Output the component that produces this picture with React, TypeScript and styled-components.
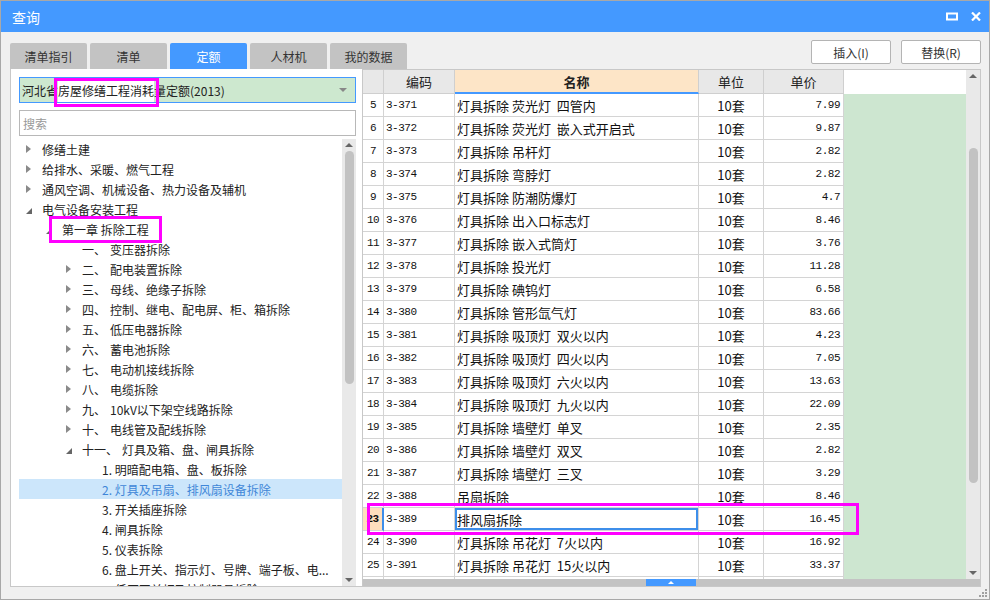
import React from 'react';
import styled, { createGlobalStyle } from 'styled-components';

// Global
const GlobalStyle = createGlobalStyle`
html, body {
  margin: 0;
  padding: 0;
  background: #f0f0f0;
}
body {
  font-family: "Noto Sans CJK SC", "Noto Sans", sans-serif;
  color: #222;
}
`

// Window frame
const Window = styled.div`
position: relative;
width: 990px;
height: 600px;
box-sizing: border-box;
border: 1px solid #a8a8a8;
background: #f0f0f0;
display: flex;
flex-direction: column;
overflow: hidden;
`

const TitleBar = styled.div`
height: 31px;
flex-shrink: 0;
background: #4499ff;
color: #fff;
font-size: 14px;
display: flex;
align-items: center;
justify-content: space-between;
padding: 0 8px 0 11px;
`

const TitleIcons = styled.div`
display: flex;
align-items: center;
gap: 13px;
`

// Toolbar with tabs and buttons
const Toolbar = styled.div`
height: 37px;
flex-shrink: 0;
display: flex;
justify-content: space-between;
padding: 0 8px 0 9px;
`

const Tabs = styled.div`
display: flex;
align-self: flex-end;
gap: 3px;
`

const Tab = styled.div<{ $active?: boolean }>`
width: 77px;
height: 26px;
border-radius: 2px 2px 0 0;
background: ${p => (p.$active ? '#4499ff' : '#c3c3c3')};
color: ${p => (p.$active ? '#fff' : '#333')};
font-size: 12px;
display: flex;
align-items: center;
justify-content: center;
`

const Buttons = styled.div`
display: flex;
gap: 10px;
margin-top: 8px;
`

const Button = styled.div`
width: 80px;
height: 24px;
box-sizing: border-box;
background: #fff;
border: 1px solid #b4b4b4;
border-radius: 2px;
font-size: 12px;
color: #333;
display: flex;
align-items: center;
justify-content: center;
`

// Body
const Body = styled.div`
height: 518px;
flex-shrink: 0;
display: flex;
padding-left: 9px;
`

const LeftPanel = styled.div`
width: 352px;
box-sizing: border-box;
background: #fff;
border-left: 1px solid #c8c8c8;
border-bottom: 1px solid #c8c8c8;
padding: 8px 6px 0 8px;
display: flex;
flex-direction: column;
`

const Dropdown = styled.div`
height: 26px;
box-sizing: border-box;
background: #cde8cf;
border: 1px solid #4499ff;
font-size: 12px;
padding: 0 8px 0 2px;
display: flex;
align-items: center;
`

const DropText = styled.span<{ $marked?: boolean }>`
align-self: stretch;
display: flex;
align-items: center;
white-space: nowrap;
background: ${p => (p.$marked ? '#fff' : 'transparent')};
`

const Caret = styled.span`
margin-left: auto;
width: 0;
height: 0;
border-left: 4px solid transparent;
border-right: 4px solid transparent;
border-top: 4px solid #888;
`

const SearchBox = styled.div`
margin-top: 7px;
height: 26px;
box-sizing: border-box;
border: 1px solid #b8b8b8;
font-size: 12px;
color: #999;
padding-left: 3px;
display: flex;
align-items: center;
`

const TreeWrap = styled.div`
margin-top: 3px;
flex: 1;
min-height: 0;
display: flex;
`

const TreeList = styled.div`
flex: 1;
overflow: hidden;
`

const TreeRow = styled.div<{ $level: number; $selected?: boolean }>`
height: 20px;
display: flex;
align-items: center;
padding-left: ${p => p.$level * 20}px;
font-size: 12px;
white-space: nowrap;
background: ${p => (p.$selected ? '#cce6fb' : 'transparent')};
color: ${p => (p.$selected ? '#3f86d8' : '#222')};
`

const ArrowBox = styled.span`
width: 23px;
flex-shrink: 0;
display: flex;
align-items: center;
padding-left: 7px;
box-sizing: border-box;
`

const Arrow = styled.span<{ $open?: boolean }>`
width: 0;
height: 0;
${p =>
  p.$open
    ? `border-left: 6px solid transparent; border-bottom: 6px solid #666; margin-top: 3px;`
    : `border-left: 5px solid #8a8a8a; border-top: 4px solid transparent; border-bottom: 4px solid transparent;`}
`

const TreeNum = styled.span`
margin-right: 4px;
`

// Scrollbars
const VScroll = styled.div<{ $width: number }>`
width: ${p => p.$width}px;
flex-shrink: 0;
background: #e9e9e9;
display: flex;
flex-direction: column;
align-items: center;
`

const ScrollArrow = styled.div<{ $dir: 'up' | 'down' }>`
width: 0;
height: 0;
border-left: 4px solid transparent;
border-right: 4px solid transparent;
${p =>
  p.$dir === 'up'
    ? 'border-bottom: 4px solid #666; margin-top: 4px;'
    : 'border-top: 4px solid #666; margin-bottom: 4px;'}
`

const ScrollThumb = styled.div<{ $top: number; $height: number }>`
width: 9px;
border-radius: 5px;
background: #c2c2c2;
margin-top: ${p => p.$top}px;
height: ${p => p.$height}px;
`

const Spacer = styled.div`
flex: 1;
`

// Table panel
const TablePanel = styled.div`
flex: 1;
margin-right: 8px;
box-sizing: border-box;
border: 1px solid #c8c8c8;
background: #fff;
display: flex;
flex-direction: column;
`

const TableMain = styled.div`
flex: 1;
min-height: 0;
display: flex;
`

const Grid = styled.div`
flex: 1;
overflow: hidden;
`

const GridRow = styled.div<{ $header?: boolean }>`
display: grid;
grid-template-columns: 21px 71px 244px 65px 80px 1fr;
height: ${p => (p.$header ? 24 : 23)}px;
`

const HeadCell = styled.div<{ $accent?: boolean; $blank?: boolean }>`
box-sizing: border-box;
background: ${p => (p.$blank ? '#fff' : p.$accent ? '#fde5c7' : '#e8e8e8')};
border-right: ${p => (p.$blank ? 'none' : '1px solid #cfcfcf')};
border-bottom: ${p => (p.$blank ? 'none' : p.$accent ? '2px solid #4499ff' : '1px solid #cfcfcf')};
font-size: 13px;
font-weight: ${p => (p.$accent ? 700 : 400)};
color: #222;
display: flex;
align-items: center;
justify-content: center;
`

const Cell = styled.div<{ $align?: 'left' | 'center' | 'right'; $focus?: boolean }>`
box-sizing: border-box;
border-right: 1px solid #d4d4d4;
border-bottom: 1px solid #d4d4d4;
font-size: 13px;
color: #111;
white-space: pre;
overflow: hidden;
display: flex;
align-items: center;
justify-content: ${p => (p.$align === 'center' ? 'center' : p.$align === 'right' ? 'flex-end' : 'flex-start')};
padding: ${p => (p.$align === 'right' ? '0 3px 0 0' : p.$align === 'center' ? '0' : '0 0 0 2px')};
box-shadow: ${p => (p.$focus ? 'inset 0 0 0 2px #3d8eea' : 'none')};
`

const RowNumCell = styled(Cell)<{ $current?: boolean }>`
justify-content: center;
padding: 0;
background: ${p => (p.$current ? '#ffdfbe' : '#fff')};
border-right: ${p => (p.$current ? '2px solid #3d8eea' : '1px solid #d4d4d4')};
font-weight: ${p => (p.$current ? 700 : 400)};
`

const FillerCell = styled.div`
background: #cde6d0;
`

const Mono = styled.span`
font-family: "Liberation Mono", "DejaVu Sans Mono", monospace;
font-size: 11px;
letter-spacing: -0.5px;
`

const HScroll = styled.div`
height: 7px;
flex-shrink: 0;
background: #c3c3c3;
display: flex;
`

const HThumb = styled.div`
margin-left: 283px;
width: 50px;
background: #4499ff;
display: flex;
align-items: center;
justify-content: center;
`

const TinyUp = styled.span`
width: 0;
height: 0;
border-left: 3px solid transparent;
border-right: 3px solid transparent;
border-bottom: 3px solid #fff;
`

const BottomStrip = styled.div`
flex: 1;
display: flex;
justify-content: flex-end;
align-items: flex-end;
padding: 0 2px 2px 0;
`

// Annotation marks laid over the screenshot
const Mark = styled.div<{ $x: number; $y: number; $w: number; $h: number }>`
position: absolute;
left: ${p => p.$x - 1}px;
top: ${p => p.$y - 1}px;
width: ${p => p.$w}px;
height: ${p => p.$h}px;
box-sizing: border-box;
border: 3px solid #f0f;
pointer-events: none;
`

type Node = { level: number; arrow?: 'open' | 'closed'; num?: string; label: string; selected?: boolean };

const tree: Node[] = [
  { level: 0, arrow: 'closed', label: '修缮土建' },
  { level: 0, arrow: 'closed', label: '给排水、采暖、燃气工程' },
  { level: 0, arrow: 'closed', label: '通风空调、机械设备、热力设备及辅机' },
  { level: 0, arrow: 'open', label: '电气设备安装工程' },
  { level: 1, arrow: 'open', label: '第一章 拆除工程' },
  { level: 2, num: '一、', label: '变压器拆除' },
  { level: 2, arrow: 'closed', num: '二、', label: '配电装置拆除' },
  { level: 2, arrow: 'closed', num: '三、', label: '母线、绝缘子拆除' },
  { level: 2, arrow: 'closed', num: '四、', label: '控制、继电、配电屏、柜、箱拆除' },
  { level: 2, arrow: 'closed', num: '五、', label: '低压电器拆除' },
  { level: 2, arrow: 'closed', num: '六、', label: '蓄电池拆除' },
  { level: 2, arrow: 'closed', num: '七、', label: '电动机接线拆除' },
  { level: 2, arrow: 'closed', num: '八、', label: '电缆拆除' },
  { level: 2, arrow: 'closed', num: '九、', label: '10kV以下架空线路拆除' },
  { level: 2, arrow: 'closed', num: '十、', label: '电线管及配线拆除' },
  { level: 2, arrow: 'open', num: '十一、', label: '灯具及箱、盘、闸具拆除' },
  { level: 3, label: '1. 明暗配电箱、盘、板拆除' },
  { level: 3, label: '2. 灯具及吊扇、排风扇设备拆除', selected: true },
  { level: 3, label: '3. 开关插座拆除' },
  { level: 3, label: '4. 闸具拆除' },
  { level: 3, label: '5. 仪表拆除' },
  { level: 3, label: '6. 盘上开关、指示灯、号牌、端子板、电...' },
  { level: 3, label: '7. 低压开关柜及控制器具拆除' },
];

const rows: [number, string, string, string][] = [
  [5, '3-371', '灯具拆除 荧光灯  四管内', '7.99'],
  [6, '3-372', '灯具拆除 荧光灯  嵌入式开启式', '9.87'],
  [7, '3-373', '灯具拆除 吊杆灯', '2.82'],
  [8, '3-374', '灯具拆除 弯脖灯', '2.82'],
  [9, '3-375', '灯具拆除 防潮防爆灯', '4.7'],
  [10, '3-376', '灯具拆除 出入口标志灯', '8.46'],
  [11, '3-377', '灯具拆除 嵌入式筒灯', '3.76'],
  [12, '3-378', '灯具拆除 投光灯', '11.28'],
  [13, '3-379', '灯具拆除 碘钨灯', '6.58'],
  [14, '3-380', '灯具拆除 管形氙气灯', '83.66'],
  [15, '3-381', '灯具拆除 吸顶灯  双火以内', '4.23'],
  [16, '3-382', '灯具拆除 吸顶灯  四火以内', '7.05'],
  [17, '3-383', '灯具拆除 吸顶灯  六火以内', '13.63'],
  [18, '3-384', '灯具拆除 吸顶灯  九火以内', '22.09'],
  [19, '3-385', '灯具拆除 墙壁灯  单叉', '2.35'],
  [20, '3-386', '灯具拆除 墙壁灯  双叉', '2.82'],
  [21, '3-387', '灯具拆除 墙壁灯  三叉', '3.29'],
  [22, '3-388', '吊扇拆除', '8.46'],
  [23, '3-389', '排风扇拆除', '16.45'],
  [24, '3-390', '灯具拆除 吊花灯  7火以内', '16.92'],
  [25, '3-391', '灯具拆除 吊花灯  15火以内', '33.37'],
];

function App(): JSX.Element {
  return (
    <>
      <GlobalStyle />
      <Window>
        <TitleBar>
          <span>查询</span>
          <TitleIcons>
            <svg width="12" height="9" viewBox="0 0 12 9">
              <rect x="1" y="1.5" width="10" height="6" fill="none" stroke="#fff" strokeWidth="2" />
            </svg>
            <svg width="10" height="9" viewBox="0 0 10 9">
              <path d="M1 0.5 L9 8.5 M9 0.5 L1 8.5" stroke="#fff" strokeWidth="2.2" />
            </svg>
          </TitleIcons>
        </TitleBar>

        <Toolbar>
          <Tabs>
            <Tab>清单指引</Tab>
            <Tab>清单</Tab>
            <Tab $active>定额</Tab>
            <Tab>人材机</Tab>
            <Tab>我的数据</Tab>
          </Tabs>
          <Buttons>
            <Button>插入(I)</Button>
            <Button>替换(R)</Button>
          </Buttons>
        </Toolbar>

        <Body>
          <LeftPanel>
            <Dropdown>
              <DropText>河北省</DropText>
              <DropText $marked>房屋修缮工程消耗</DropText>
              <DropText>量定额(2013)</DropText>
              <Caret />
            </Dropdown>
            <SearchBox>搜索</SearchBox>
            <TreeWrap>
              <TreeList>
                {tree.map((n, i) => (
                  <TreeRow key={i} $level={n.level} $selected={n.selected}>
                    <ArrowBox>{n.arrow && <Arrow $open={n.arrow === 'open'} />}</ArrowBox>
                    {n.num && <TreeNum>{n.num}</TreeNum>}
                    <span>{n.label}</span>
                  </TreeRow>
                ))}
              </TreeList>
              <VScroll $width={14}>
                <ScrollArrow $dir="up" />
                <ScrollThumb $top={4} $height={233} />
                <Spacer />
                <ScrollArrow $dir="down" />
              </VScroll>
            </TreeWrap>
          </LeftPanel>

          <TablePanel>
            <TableMain>
              <Grid>
                <GridRow $header>
                  <HeadCell />
                  <HeadCell>编码</HeadCell>
                  <HeadCell $accent>名称</HeadCell>
                  <HeadCell>单位</HeadCell>
                  <HeadCell>单价</HeadCell>
                  <HeadCell $blank />
                </GridRow>
                {rows.map(([n, code, name, price]) => {
                  const current = n === 23;
                  return (
                    <GridRow key={n}>
                      <RowNumCell $current={current}><Mono>{n}</Mono></RowNumCell>
                      <Cell><Mono>{code}</Mono></Cell>
                      <Cell $focus={current}>{name}</Cell>
                      <Cell $align="center">10套</Cell>
                      <Cell $align="right"><Mono>{price}</Mono></Cell>
                      <FillerCell />
                    </GridRow>
                  );
                })}
                <GridRow>
                  <RowNumCell />
                  <Cell />
                  <Cell />
                  <Cell />
                  <Cell />
                  <FillerCell />
                </GridRow>
              </Grid>
              <VScroll $width={14}>
                <ScrollArrow $dir="up" />
                <ScrollThumb $top={70} $height={335} />
                <Spacer />
                <ScrollArrow $dir="down" />
              </VScroll>
            </TableMain>
            <HScroll>
              <HThumb><TinyUp /></HThumb>
            </HScroll>
          </TablePanel>
        </Body>

        <BottomStrip>
          <svg width="8" height="8" viewBox="0 0 8 8">
            <rect x="6" y="0" width="2" height="2" fill="#a0a0a0" />
            <rect x="3" y="3" width="2" height="2" fill="#a0a0a0" />
            <rect x="6" y="3" width="2" height="2" fill="#a0a0a0" />
            <rect x="0" y="6" width="2" height="2" fill="#a0a0a0" />
            <rect x="3" y="6" width="2" height="2" fill="#a0a0a0" />
            <rect x="6" y="6" width="2" height="2" fill="#a0a0a0" />
          </svg>
        </BottomStrip>

        <Mark $x={54} $y={78} $w={105} $h={29} />
        <Mark $x={49} $y={216} $w={113} $h={27} />
        <Mark $x={367} $y={503} $w={492} $h={32} />
      </Window>
    </>
  );
}

export default App;
